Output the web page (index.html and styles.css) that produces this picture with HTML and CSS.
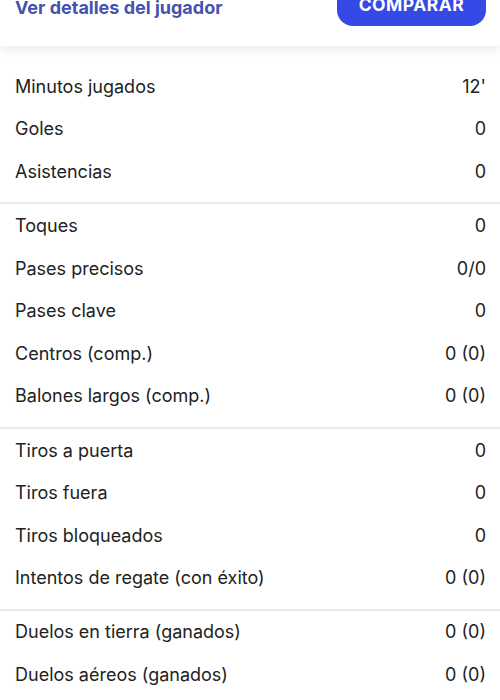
FILE: index.html
```html
<!DOCTYPE html>
<html lang="es">
<head>
    <meta charset="UTF-8">
    <meta name="viewport" content="width=device-width, initial-scale=1.0">
    <title>Estadísticas del jugador</title>
    <link rel="stylesheet" href="styles.css">
</head>
<body>

    <div class="player-header">
        <a href="#" class="player-link">Ver detalles del jugador</a>
        <button class="compare-btn">COMPARAR</button>
    </div>

    <div class="stats">
        <div class="stat-group">
            <div class="stat-row"><span>Minutos jugados</span><span>12'</span></div>
            <div class="stat-row"><span>Goles</span><span>0</span></div>
            <div class="stat-row"><span>Asistencias</span><span>0</span></div>
        </div>

        <div class="stat-group">
            <div class="stat-row"><span>Toques</span><span>0</span></div>
            <div class="stat-row"><span>Pases precisos</span><span>0/0</span></div>
            <div class="stat-row"><span>Pases clave</span><span>0</span></div>
            <div class="stat-row"><span>Centros (comp.)</span><span>0 (0)</span></div>
            <div class="stat-row"><span>Balones largos (comp.)</span><span>0 (0)</span></div>
        </div>

        <div class="stat-group">
            <div class="stat-row"><span>Tiros a puerta</span><span>0</span></div>
            <div class="stat-row"><span>Tiros fuera</span><span>0</span></div>
            <div class="stat-row"><span>Tiros bloqueados</span><span>0</span></div>
            <div class="stat-row"><span>Intentos de regate (con éxito)</span><span>0 (0)</span></div>
        </div>

        <div class="stat-group">
            <div class="stat-row"><span>Duelos en tierra (ganados)</span><span>0 (0)</span></div>
            <div class="stat-row"><span>Duelos aéreos (ganados)</span><span>0 (0)</span></div>
        </div>
    </div>

</body>
</html>
```

FILE: styles.css
```css
body {
    font-family: Inter, "Noto Sans", sans-serif;
    background-color: white;
    color: #222;
    margin: 0;
    height: 700px;
    overflow: hidden;
}

.player-header {
    display: flex;
    justify-content: space-between;
    align-items: center;
    margin-top: -18px;
    padding: 0 14px 20px 15px;
    height: 44px;
    background-color: white;
    box-shadow: 0 3px 10px rgba(0, 0, 0, 0.09);
    position: relative;
}

.player-link {
    color: #4552b0;
    font-size: 18px;
    font-weight: 700;
    text-decoration: none;
    margin-top: 6px;
}

.compare-btn {
    height: 44px;
    width: 149px;
    background-color: #3549e6;
    color: white;
    border: none;
    border-radius: 16px;
    font-family: inherit;
    font-size: 17.5px;
    font-weight: 700;
    letter-spacing: 0.5px;
}

.stats {
    padding-top: 19px;
}

.stat-group {
    padding-bottom: 9.5px;
    border-bottom: 2px solid #e9e9e9;
}

.stat-row {
    display: flex;
    justify-content: space-between;
    align-items: center;
    height: 42.6px;
    padding: 0 14px 0 15px;
    font-size: 18px;
}
```
